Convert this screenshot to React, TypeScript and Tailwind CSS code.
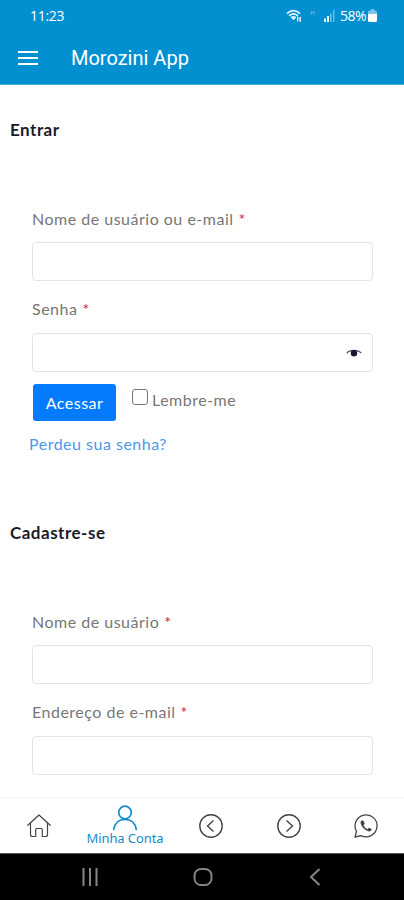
import type { ReactNode } from "react";

const Wifi = () => (
    <svg viewBox="0 0 18 14" className="h-3.5 w-[18px]" fill="none" stroke="#e8f6fd" strokeLinecap="round">
        <path d="M1.5 4.2C5.2 1 9.8 1 13.5 4.2" strokeWidth="1.7" />
        <path d="M3.6 6.4c2.4-2 5.4-2 7.8 0" strokeWidth="1.7" />
        <path d="M5.4 8.2 7.5 10.8 9.8 8.2c-1.4-.9-3-.9-4.4 0Z" fill="#e8f6fd" strokeWidth="1" />
        <path d="M11.7 8.2v3.6M14.2 12.2V8.6" strokeWidth="1.5" />
    </svg>
);

const Signal = () => (
    <svg viewBox="0 0 12 12" className="size-3">
        <path d="M1 8.5h2V12H1zM4 6h2v6H4z" fill="#e8f6fd" />
        <path d="M7 3.5h1.6V12H7zM10 0h1.4v12H10z" fill="#6dbde6" />
    </svg>
);

const Battery = () => (
    <svg viewBox="0 0 9 13" className="h-[13px] w-[9px]">
        <path d="M3 0h3v1.5h1.5Q9 1.500 9 3v2H0V3q0-1.500 1.500-1.500H3z" fill="#7cc5ea" />
        <path d="M0 5h9v6.500q0 1.500-1.500 1.500h-6Q0 13 0 11.500z" fill="#fff" />
    </svg>
);

const Label = ({ children, className = "" }: { children: ReactNode; className?: string }) => (
    <label className={`flex h-6 items-center gap-[5px] text-[16px] whitespace-nowrap text-[#777] ${className}`}>
        {children}
        <span className="text-[#e02020]">*</span>
    </label>
);

const Field = ({ children }: { children?: ReactNode }) => (
    <div className="flex h-[39px] items-center justify-end rounded-[4px] border border-[#e2e4e6] bg-white pr-2.5">{children}</div>
);

const Eye = () => (
    <svg viewBox="0 0 16 8" className="h-2 w-4">
        <path d="M.7 4.300C3.500.5 12 .3 15.300 4.200" fill="none" stroke="#555562" strokeWidth="1.200" />
        <circle cx="8" cy="4.200" r="3.200" fill="#15152e" />
    </svg>
);

const Header = () => (
    <header className="flex h-[85px] flex-col border-b border-[#4fadd9] bg-[#0390d1] text-white">
        <div className="flex h-8 items-center justify-between pr-[27px] pl-[30px] font-['Open_Sans',sans-serif] text-[14px]">
            <span className="tracking-[-0.3px]">11:23</span>
            <div className="flex items-center">
                <Wifi />
                <span className="mb-1 ml-1.5 text-[6px] text-[#8dcdec]">H</span>
                <span className="ml-2 flex">
                    <Signal />
                </span>
                <span className="mr-0.5 ml-[5px] tracking-[-0.5px]">58%</span>
                <Battery />
            </div>
        </div>
        <div className="flex h-[53px] items-center pl-[18px]">
            <svg viewBox="0 0 20 14" className="h-3.5 w-5" fill="none" stroke="#fff" strokeWidth="2">
                <path d="M0 1h20M0 7h20M0 13h20" />
            </svg>
            <h1 className="ml-[33px] font-['Roboto',sans-serif] text-[20px] whitespace-nowrap">Morozini App</h1>
        </div>
    </header>
);

const BottomNav = () => (
    <nav className="flex h-14 border-t border-[#f4f4f4] bg-white text-[#444]">
        <a href="#" className="flex w-[78px] items-center justify-center">
            <svg viewBox="0 0 24 24" className="size-6" fill="none" stroke="currentColor" strokeWidth="1.200" strokeLinecap="round" strokeLinejoin="round">
                <path d="m.8 11.300L12 1l11.200 10.300" />
                <path d="M3.500 9v11.500q0 2 2 2h3.200v-7q0-1 1-1h4.600q1 0 1 1v7h3.200q2 0 2-2V9" />
            </svg>
        </a>
        <a href="#" className="flex w-[94px] flex-col items-center pt-[7px] text-[#168bc9]">
            <svg viewBox="0 0 26 26" className="size-[26px]" fill="none" stroke="currentColor" strokeWidth="1.700" strokeLinecap="round">
                <circle cx="13" cy="7.500" r="6.300" />
                <path d="M1.700 24.500C2.700 18 7.300 14.300 13 14.300S23.300 18 24.300 24.500" />
            </svg>
            <span className="mt-px font-['Noto_Sans',sans-serif] text-[13px] leading-3 tracking-[-0.1px] whitespace-nowrap">Minha Conta</span>
        </a>
        <a href="#" className="flex w-[78px] items-center justify-center">
            <svg viewBox="0 0 24 24" className="size-6" fill="none" stroke="currentColor" strokeWidth="1.400">
                <circle cx="12" cy="12" r="11.200" />
                <path d="m14.500 6.500-6 5.500 6 5.500" />
            </svg>
        </a>
        <a href="#" className="flex w-[77px] items-center justify-center">
            <svg viewBox="0 0 24 24" className="size-6" fill="none" stroke="currentColor" strokeWidth="1.400">
                <circle cx="12" cy="12" r="11.200" />
                <path d="m9.500 6.500 6 5.500-6 5.500" />
            </svg>
        </a>
        <a href="#" className="flex w-[77px] items-center justify-center">
            <svg viewBox="0 0 24 24" className="size-6" fill="none" stroke="currentColor" strokeWidth="1.300" strokeLinejoin="round">
                <path d="M1 23l1.500-5.700A11 11 0 1 1 7 21.600z" />
                <path
                    d="M8 6.500c-1.200.5-1.600 1.700-1.200 3 1 3.600 4.200 6.900 8 7.700 1.300.2 2.600-.7 2.800-2l-2.600-1.400-1.500 1.400c-1.900-.8-3.200-2.200-4-4l1.200-1.500L9.300 6.700Q8.800 6.200 8 6.500z"
                    fill="currentColor"
                    strokeWidth=".2"
                />
            </svg>
        </a>
    </nav>
);

const SystemBar = () => (
    <div className="flex h-[47px] items-center border-t border-[#555] bg-black text-[#858585]">
        <svg viewBox="0 0 16 18" className="ml-[82px] h-[18px] w-4" fill="none" stroke="currentColor" strokeWidth="2">
            <path d="M1.500 0v18M8 0v18M14.500 0v18" />
        </svg>
        <svg viewBox="0 0 20 18" className="ml-[95px] h-[18px] w-5" fill="none" stroke="currentColor" strokeWidth="2">
            <rect x="1.500" y="1" width="17" height="16" rx="6.500" />
        </svg>
        <svg viewBox="0 0 12 18" className="ml-[96px] h-[18px] w-3" fill="none" stroke="currentColor" strokeWidth="2">
            <path d="M10.500 1 2 9l8.500 8" />
        </svg>
    </div>
);

export default function App() {
    return (
        <div className="flex h-[900px] w-[404px] flex-col overflow-hidden bg-white">
            <Header />

            <main className="min-h-0 flex-1 overflow-hidden font-['Lato',sans-serif]">
                <section className="pt-[33px]">
                    <h2 className="pl-2.5 text-[17px] leading-6 font-bold tracking-[0.5px] text-[#1b1b2b]">Entrar</h2>
                    <form className="pt-[65px] pr-[31px] pl-8">
                        <Label className="tracking-[0.5px]">Nome de usuário ou e-mail</Label>
                        <div className="pt-[11px]">
                            <Field />
                        </div>
                        <Label className="mt-4 tracking-[0.5px]">Senha</Label>
                        <div className="pt-3">
                            <Field>
                                <Eye />
                            </Field>
                        </div>
                        <div className="mt-3 flex">
                            <button type="button" className="ml-px h-[37px] w-[83px] rounded-[3px] bg-[#047bfd] text-[16px] tracking-[0.5px] text-white">
                                Acessar
                            </button>
                            <label className="ml-4 flex h-8 items-center text-[16px] tracking-[0.5px] text-[#777]">
                                <span className="mb-1.5 size-4 rounded-[3px] border border-[#777]" />
                                <span className="ml-1">Lembre-me</span>
                            </label>
                        </div>
                        <a href="#" className="mt-[11px] -ml-[3px] block text-[16px] leading-6 tracking-[0.5px] text-[#4b98e8]">
                            Perdeu sua senha?
                        </a>
                    </form>
                </section>

                <section className="pt-[65px]">
                    <h2 className="pl-2.5 text-[17px] leading-6 font-bold tracking-[0.5px] text-[#1b1b2b]">Cadastre-se</h2>
                    <form className="pt-[65px] pr-[31px] pl-8">
                        <Label className="tracking-[0.5px]">Nome de usuário</Label>
                        <div className="pt-[11px]">
                            <Field />
                        </div>
                        <Label className="mt-4 tracking-[0.5px]">Endereço de e-mail</Label>
                        <div className="pt-3">
                            <Field />
                        </div>
                        <Label className="mt-[17px] tracking-[0.5px]">Senha</Label>
                    </form>
                </section>
            </main>

            <BottomNav />
            <SystemBar />
        </div>
    );
}
